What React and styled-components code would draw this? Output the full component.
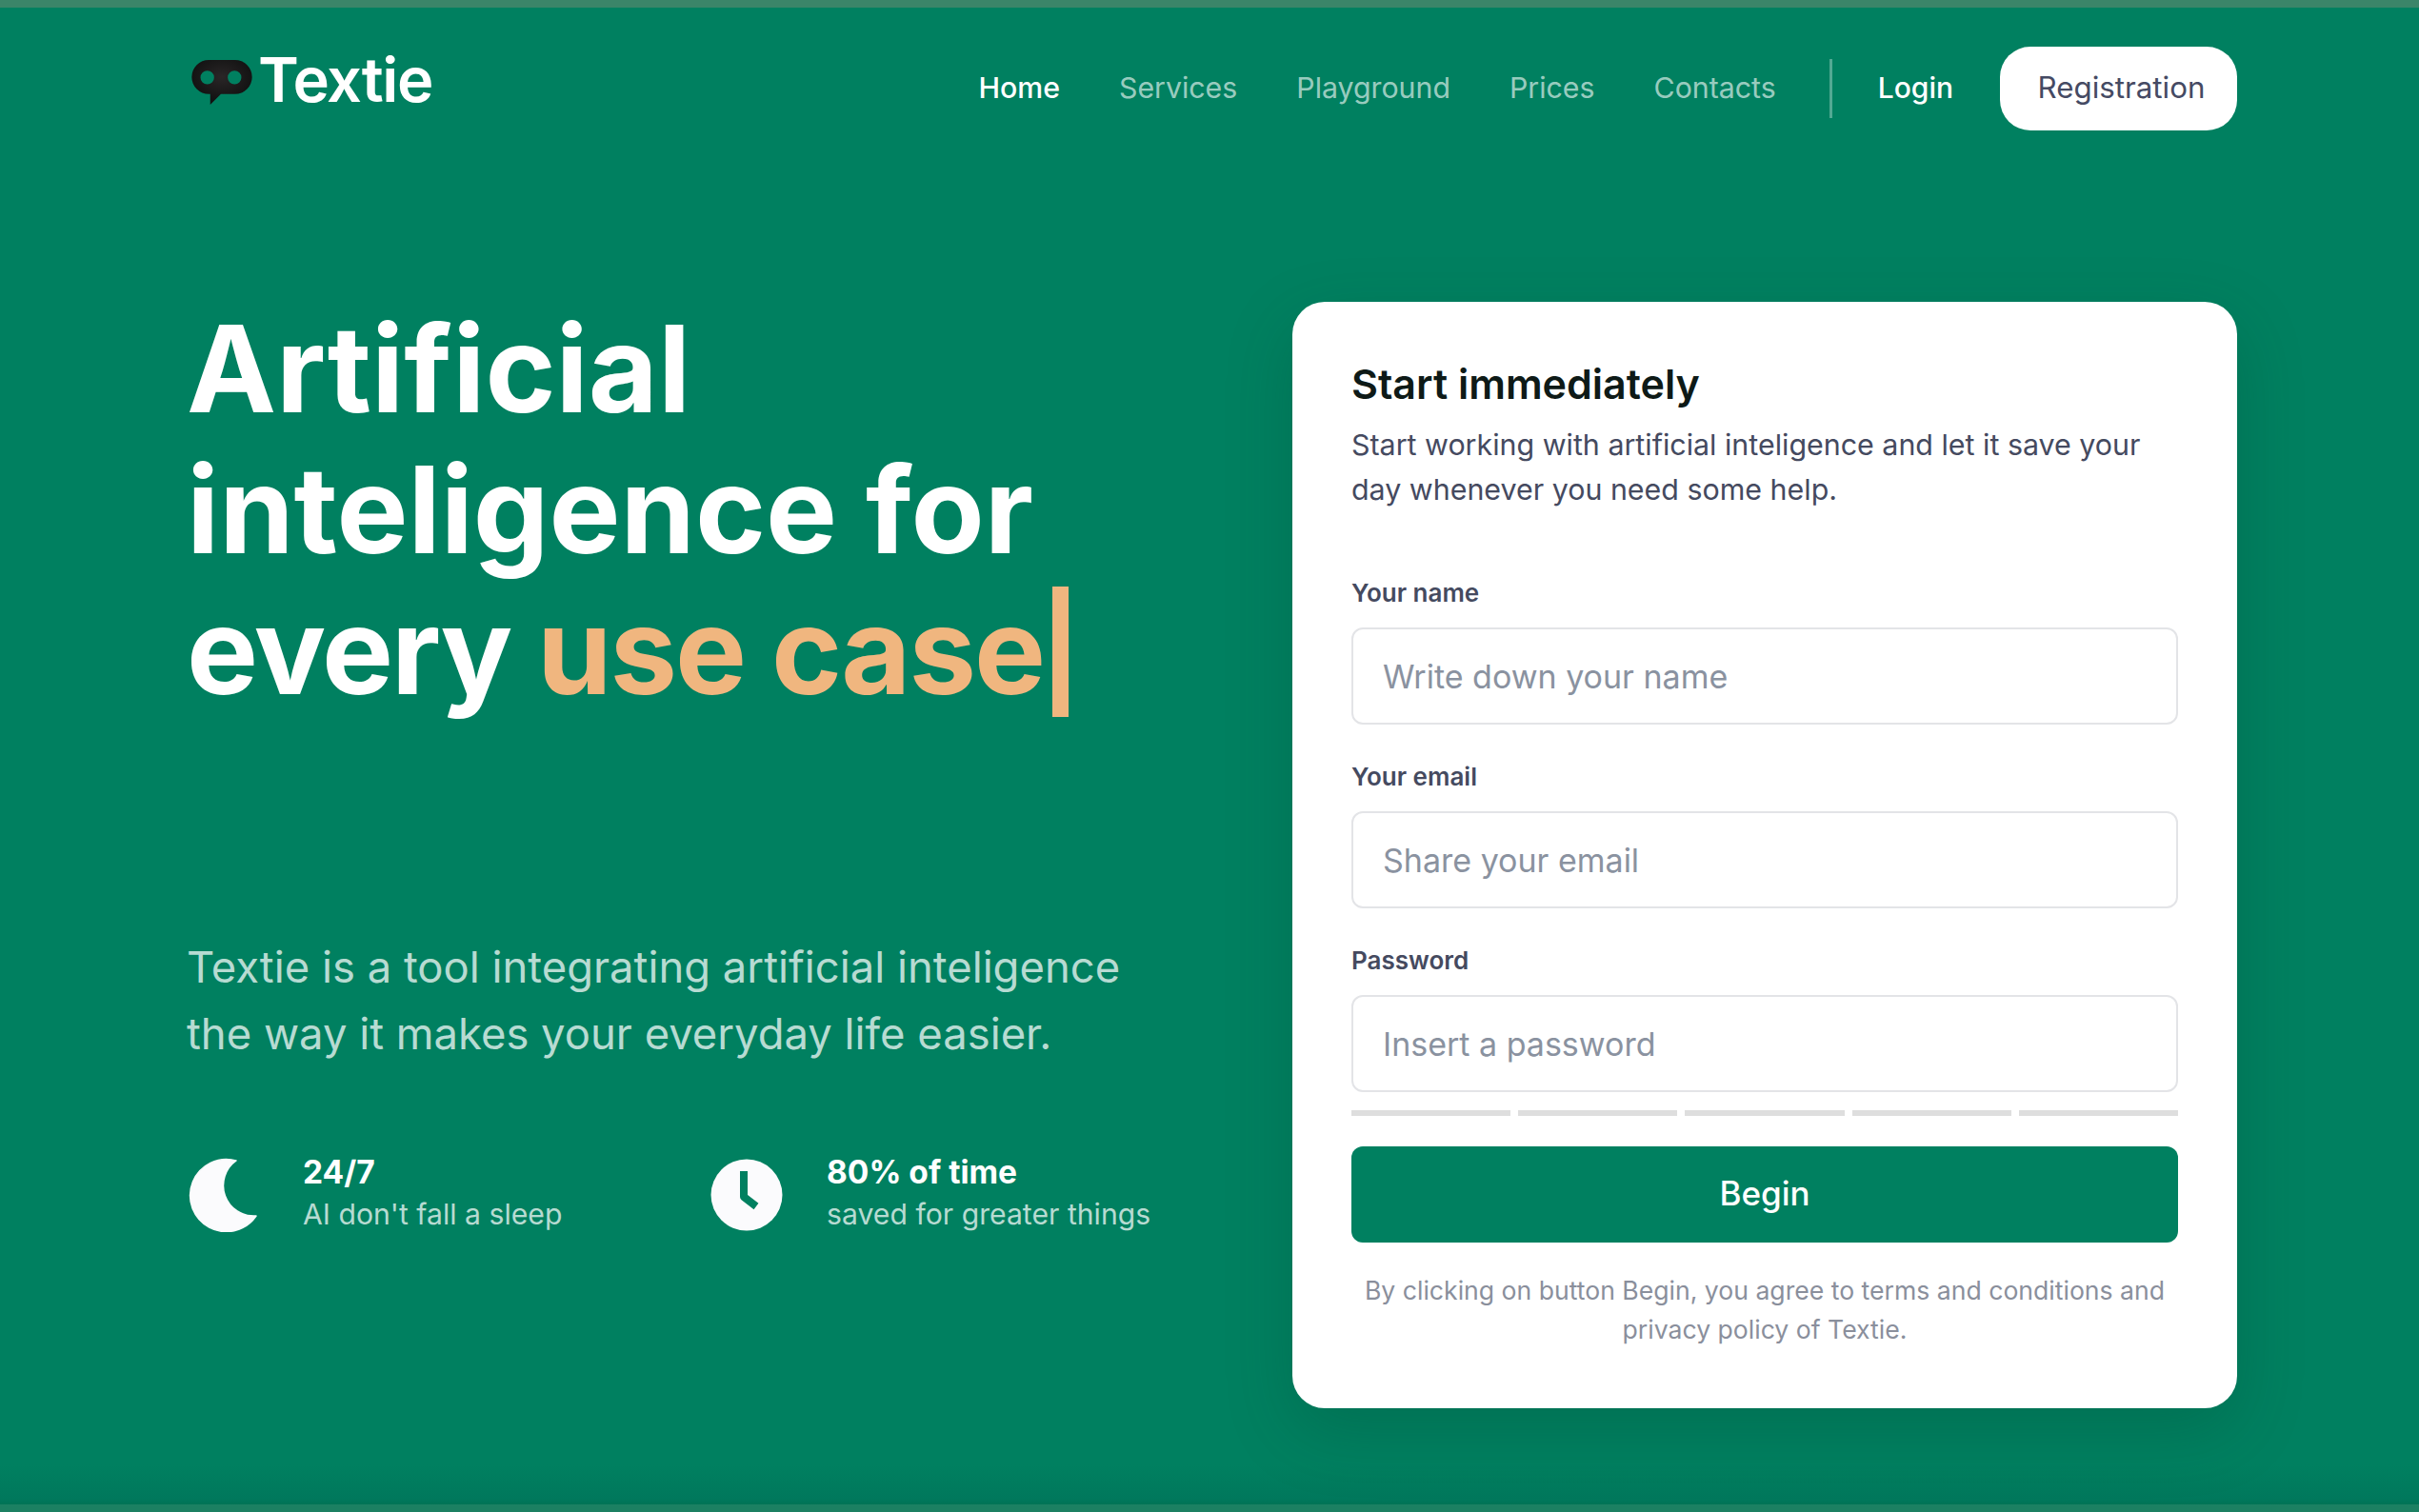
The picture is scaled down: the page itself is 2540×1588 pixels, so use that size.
import React from 'react';
import styled, { createGlobalStyle } from 'styled-components';

const Global = createGlobalStyle`
  html, body { margin: 0; padding: 0; }
  body { font-family: "Inter", "Liberation Sans", sans-serif; background: #008060; }
  * { box-sizing: border-box; }
`;

const Page = styled.div`
  width: 2540px; height: 1588px; overflow: hidden;
  display: flex; flex-direction: column;
  border-top: 8px solid #3b8569;
  border-bottom: 8px solid #1c8062;
  background: linear-gradient(180deg, #008060 0, #008060 1530px, #00785c 1566px, #007355 100%);
  padding: 0 191px 0 196px;
`;

const Header = styled.header`
  display: flex; align-items: center; justify-content: space-between;
  height: 88px; margin-top: 41px;
`;

const Brand = styled.div`
  display: flex; align-items: center; gap: 6px;
  margin: -14px 0 0 5px;
`;
const BrandName = styled.span`
  font-family: "Inter", sans-serif; font-weight: 600; font-size: 65px; line-height: 1;
  color: #fff; letter-spacing: -1.4px; margin-top: -6px;
`;

const Nav = styled.nav`display: flex; align-items: center;`;
const NavLink = styled.a`
  font-size: 30.3px; font-weight: ${p => (p.$active ? 500 : 400)};
  color: ${p => (p.$active ? '#fff' : 'rgba(255,255,255,.62)')};
  margin-right: 62px; margin-top: -2px;
`;
const Divider = styled.span`
  width: 3px; height: 62px; background: rgba(255,255,255,.32);
  margin-right: 48px; margin-left: -6px;
`;
const Login = styled.a`font-size: 30px; font-weight: 500; color: #fff; margin-right: 49px; margin-top: -2px;`;
const RegisterButton = styled.button`
  width: 249px; height: 88px; border: 0; border-radius: 32px; background: #fff;
  font: 400 31.3px "Inter", sans-serif; color: #454a63; padding: 0 0 3px 6px;
`;

const Main = styled.main`
  display: flex; justify-content: space-between; align-items: flex-start;
  margin-top: 180px;
`;
const Hero = styled.section`width: 1120px; display: flex; flex-direction: column;`;
const Title = styled.h1`
  margin: -4px 0 0; font-family: "Inter", sans-serif; font-weight: 700; font-size: 126px; line-height: 148px;
  color: #fff; white-space: nowrap; letter-spacing: 0;
`;
const TightLine = styled.span`letter-spacing: -2px;`;
const Accent = styled.span`color: #f0b67f;`;
const Caret = styled.span`
  display: inline-block; width: 17px; height: 137px; background: #f0b67f;
  vertical-align: -24px; margin-left: 9px;
`;
const Lead = styled.p`
  margin: 224px 0 0; font-size: 45.4px; line-height: 70px; color: rgba(255,255,255,.72); font-weight: 400;
  white-space: nowrap;
`;
const Stats = styled.div`display: flex; margin-top: 88px;`;
const Stat = styled.div`display: flex; align-items: center; width: 549px;`;
const StatIcon = styled.svg`width: 78px; height: 78px; flex: none; margin: 3px ${p => p.$gap}px 0 0;`;
const StatText = styled.div`display: flex; flex-direction: column; white-space: nowrap;`;
const StatTitle = styled.strong`font-size: 33.5px; font-weight: 700; line-height: 44px; color: #fff;`;
const StatSub = styled.span`font-size: 30.2px; line-height: 44px; color: rgba(255,255,255,.72);`;

const Card = styled.form`
  width: 992px; height: 1162px; background: #fff; border-radius: 34px;
  padding: 62px; box-shadow: 0 24px 70px rgba(0,60,40,.22);
  display: flex; flex-direction: column;
`;
const CardTitle = styled.h2`
  margin: 0; font-size: 43px; line-height: 48px; font-weight: 600; color: #0e1a17;
`;
const CardText = styled.p`
  margin: 17px 0 0; font-size: 30.4px; line-height: 47px; color: #454a5f;
`;
const Field = styled.label`display: flex; flex-direction: column; margin-top: ${p => p.$top}px;`;
const FieldLabel = styled.span`font-size: 26px; line-height: 32px; font-weight: 600; color: #454a5f; margin-bottom: 20px;`;
const Input = styled.input`
  height: 102px; border: 2px solid #e3e4e7; border-radius: 12px; padding: 0 31px;
  font: 400 34px "Inter", sans-serif; color: #454a5f; background: #fff;
  &::placeholder { color: #8a92a0; opacity: 1; }
`;
const Strength = styled.div`display: grid; grid-template-columns: repeat(5, 1fr); gap: 8px; margin-top: 19px;`;
const StrengthBar = styled.span`height: 6px; background: #dedede;`;
const Submit = styled.button`
  height: 103px; margin-top: 32px; border: 0; border-radius: 12px; background: #008060;
  color: #fff; font: 500 35px "Inter", sans-serif; padding: 0 0 3px;
`;
const Note = styled.p`
  margin: 30px 0 0; text-align: center; font-size: 26.6px; line-height: 41px; color: #8a8f9c;
`;

const Logo = () => (
  <svg width="64" height="47" viewBox="0 0 62 46" aria-hidden="true">
    <defs>
      <radialGradient id="logoFill" cx="50%" cy="38%" r="55%">
        <stop offset="0" stopColor="#2a2627" />
        <stop offset="1" stopColor="#111" />
      </radialGradient>
    </defs>
    <path fillRule="evenodd" fill="url(#logoFill)" d="M17.5 0h27a17.5 17.5 0 0 1 0 35H30L19 46V35h-1.5A17.5 17.5 0 0 1 17.5 0ZM16 11a7 7 0 1 0 0 14 7 7 0 0 0 0-14Zm28 0a7 7 0 1 0 0 14 7 7 0 0 0 0-14Z" />
  </svg>
);

export default function App() {
  return (
    <Page>
      <Global />
      <Header>
        <Brand><Logo /><BrandName>Textie</BrandName></Brand>
        <Nav>
          <NavLink $active>Home</NavLink>
          <NavLink>Services</NavLink>
          <NavLink>Playground</NavLink>
          <NavLink>Prices</NavLink>
          <NavLink>Contacts</NavLink>
          <Divider />
          <Login>Login</Login>
          <RegisterButton type="button">Registration</RegisterButton>
        </Nav>
      </Header>
      <Main>
        <Hero>
          <Title>Artificial<br />inteligence for<br /><TightLine>every <Accent>use case</Accent></TightLine><Caret /></Title>
          <Lead>Textie is a tool integrating artificial inteligence<br />the way it makes your everyday life easier.</Lead>
          <Stats>
            <Stat>
              <StatIcon $gap={44} viewBox="0 0 78 78">
                <path fill="#fbfbfd" d="M52 3A38 38 0 1 0 73 61A32 32 0 0 1 52 3Z" stroke="#fbfbfd" strokeWidth="1.5" strokeLinejoin="round" />
              </StatIcon>
              <StatText><StatTitle>24/7</StatTitle><StatSub>AI don't fall a sleep</StatSub></StatText>
            </Stat>
            <Stat>
              <StatIcon $gap={45} viewBox="0 0 78 78">
                <circle cx="39" cy="39" r="37.5" fill="#fbfbfd" />
                <path fill="none" stroke="#008060" strokeWidth="8" strokeLinejoin="round" d="M36 14v27l13 10" />
              </StatIcon>
              <StatText><StatTitle>80% of time</StatTitle><StatSub>saved for greater things</StatSub></StatText>
            </Stat>
          </Stats>
        </Hero>
        <Card>
          <CardTitle>Start immediately</CardTitle>
          <CardText>Start working with artificial inteligence and let it save your day whenever you need some help.</CardText>
          <Field $top={69}><FieldLabel>Your name</FieldLabel><Input placeholder="Write down your name" /></Field>
          <Field $top={39}><FieldLabel>Your email</FieldLabel><Input placeholder="Share your email" /></Field>
          <Field $top={39}><FieldLabel>Password</FieldLabel><Input placeholder="Insert a password" /></Field>
          <Strength>{[0, 1, 2, 3, 4].map(i => <StrengthBar key={i} />)}</Strength>
          <Submit type="button">Begin</Submit>
          <Note>By clicking on button Begin, you agree to terms and conditions and privacy policy of Textie.</Note>
        </Card>
      </Main>
    </Page>
  );
}
